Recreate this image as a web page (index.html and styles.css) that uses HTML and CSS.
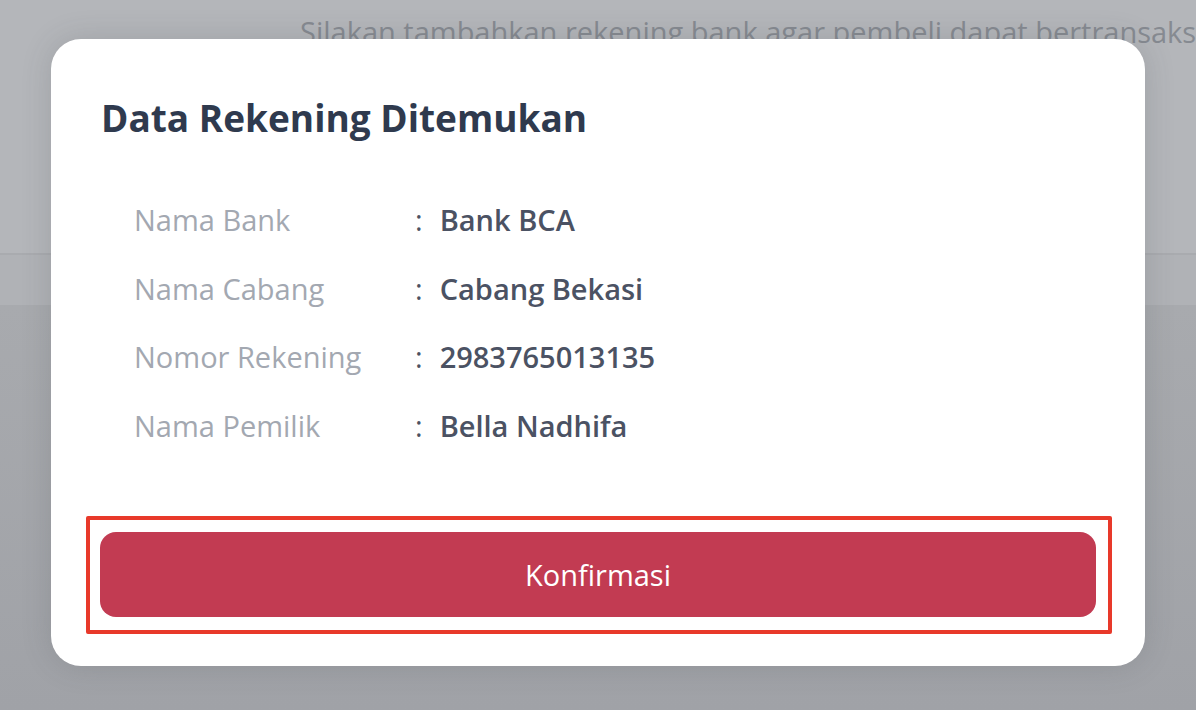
FILE: index.html
```html
<!DOCTYPE html>
<html lang="id">
<head>
<meta charset="utf-8">
<title>Data Rekening Ditemukan</title>
<link rel="stylesheet" href="styles.css">
</head>
<body>
<div class="page">
  <header class="page-head">
    <p class="page-hint">Silakan tambahkan rekening bank agar pembeli dapat bertransaksi</p>
  </header>
  <div class="page-band"></div>
  <div class="page-rest"></div>
</div>

<div class="modal">
  <h2 class="modal-title">Data Rekening Ditemukan</h2>
  <dl class="info">
    <div class="info-row"><dt>Nama Bank</dt><dd>Bank BCA</dd></div>
    <div class="info-row"><dt>Nama Cabang</dt><dd>Cabang Bekasi</dd></div>
    <div class="info-row"><dt>Nomor Rekening</dt><dd>2983765013135</dd></div>
    <div class="info-row"><dt>Nama Pemilik</dt><dd>Bella Nadhifa</dd></div>
  </dl>
  <div class="highlight">
    <button class="btn-confirm" type="button">Konfirmasi</button>
  </div>
</div>
</body>
</html>
```

FILE: styles.css
```css
* { box-sizing: border-box; }
html, body { margin: 0; padding: 0; }
body {
  width: 1196px;
  height: 710px;
  overflow: hidden;
  font-family: "Open Sans", "Noto Sans", sans-serif;
  background: #a6a8ac;
  position: relative;
}
.page {
  display: flex;
  flex-direction: column;
  height: 710px;
}
.page-head {
  height: 255px;
  background: #b4b6ba;
  border-bottom: 2px solid #a9abaf;
  padding: 14px 0 0 300px;
}
.page-hint {
  margin: 0;
  font-size: 29px;
  line-height: 36px;
  color: #868a91;
  white-space: nowrap;
}
.page-band {
  height: 50px;
  background: #b0b2b6;
}
.page-rest {
  flex: 1;
  background: linear-gradient(#a8aaae, #a0a2a7);
}

.modal {
  position: absolute;
  left: 51px;
  top: 39px;
  width: 1094px;
  height: 627px;
  background: #ffffff;
  border-radius: 30px;
  box-shadow: 0 0 30px rgba(60, 64, 70, 0.18);
  padding: 57px 33px 32px 35px;
  display: flex;
  flex-direction: column;
}
.modal-title {
  margin: 0 0 0 15px;
  font-size: 37px;
  line-height: 44px;
  font-weight: 700;
  color: #2f3a4e;
}
.info {
  margin: 46px 0 0 48px;
  display: flex;
  flex-direction: column;
}
.info-row {
  display: flex;
  height: 68.5px;
  line-height: 68.5px;
  font-size: 29px;
}
.info-row dt {
  width: 281px;
  color: #a3a8b1;
  font-weight: 400;
}
.info-row dd {
  margin: 0;
  color: #4b5263;
  font-weight: 600;
}
.info-row dd::before {
  content: ":";
  font-weight: 400;
  color: #4b5263;
  margin-right: 17px;
}
.highlight {
  margin-top: auto;
  border: 4px solid #e8392a;
  border-radius: 2px;
  padding: 12px 12px 13px 10px;
}
.btn-confirm {
  display: flex;
  align-items: center;
  justify-content: center;
  width: 100%;
  height: 85px;
  border: 0;
  border-radius: 16px;
  background: #c23b52;
  color: #ffffff;
  font-family: "Open Sans", "Noto Sans", sans-serif;
  font-size: 29px;
  font-weight: 500;
  padding: 0;
}
```
